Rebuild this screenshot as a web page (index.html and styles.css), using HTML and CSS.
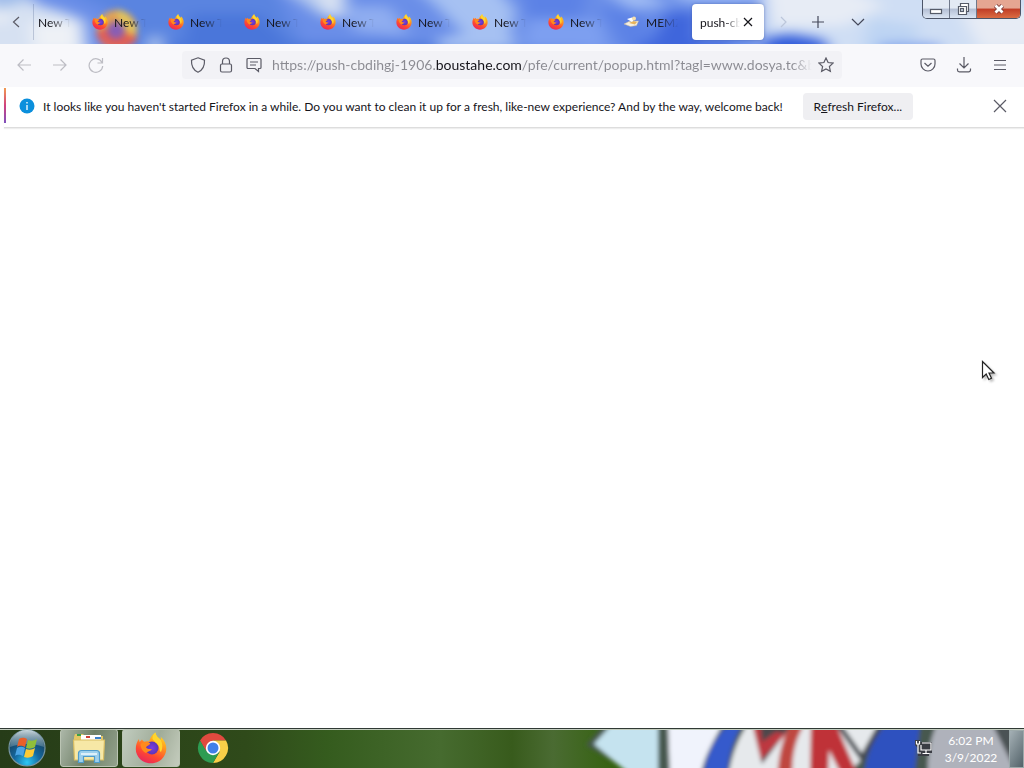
FILE: index.html
```html
<!DOCTYPE html>
<html lang="en">
<head>
  <meta charset="UTF-8" />
  <title>push-cbdihgj-1906.boustahe.com</title>
  <link rel="stylesheet" href="styles.css">
</head>
<body>
  <!-- Shared icons -->
  <svg class="defs" aria-hidden="true">
    <defs>
      <linearGradient id="flame" x1="0.8" y1="0" x2="0.3" y2="1">
        <stop offset="0" stop-color="#ffe226" />
        <stop offset="0.35" stop-color="#ff9a1f" />
        <stop offset="0.7" stop-color="#ff4a30" />
        <stop offset="1" stop-color="#e8265e" />
      </linearGradient>
      <radialGradient id="globe">
        <stop offset="0" stop-color="#7a3fe0" />
        <stop offset="1" stop-color="#5b35b8" />
      </radialGradient>
      <symbol id="firefox" viewBox="0 0 32 32">
        <path fill="url(#flame)" d="M4 7c0 1 .2 2 .6 3L7 7.500c.4 1 1.200 1.800 2.200 2.300 1.600-.6 3.200-.7 5-.3C15 6 17 2.500 20.500.500c.3 3.500 3 5 5.200 7.500.4-1.200.3-2.300 0-3.300C29.500 8 31.500 12.500 31.300 17 31 25 24.500 31.300 16 31.300S.8 25 .8 17c0-4 1.200-7.400 3.200-10z" />
        <circle cx="17" cy="16" r="6.500" fill="url(#globe)" />
        <path fill="#ff8a1c" d="M5.500 12c2.500-2.600 7-2.600 9.800-.5-1 2-3.300 2.300-4.300 3.700 1.500 2.400 4 1.200 6 2.300-1.500 2-4.500 1.600-6 3.500-3-1-5.500-5-5.500-9z" />
        <path fill="#ffd52e" d="M20.500.500c.3 3.500 3 5 5.200 7.500 2 3.500 2.300 8 .3 12-1-.5-1.500-1.500-1.500-3C24 11 18 9.500 17.500 6.500c0-2.500 1-4.500 3-6z" />
      </symbol>
    </defs>
  </svg>

  <!-- Tab strip -->
  <header class="titlebar">
    <svg class="sky" viewBox="0 0 1024 44" preserveAspectRatio="none" aria-hidden="true">
      <defs>
        <filter id="soft" filterUnits="userSpaceOnUse" x="-40" y="-40" width="1104" height="130" color-interpolation-filters="sRGB"><feGaussianBlur stdDeviation="8 6" /></filter>
        <filter id="glass" x="-20%" y="-20%" width="140%" height="140%" color-interpolation-filters="sRGB"><feGaussianBlur stdDeviation="3" /></filter>
      </defs>
      <rect width="1024" height="44" fill="#6a8ee8" />
      <g filter="url(#soft)">
        <path fill="#6a8ee8" d="M-40-40h1104v130H-40z" />
        <path fill="#5a84e0" d="M40-20h230l40 80H130l-20-50z" />
        <path fill="#4a76da" d="M190 14h70l50 50H180zM140 44h440v20H140z" />
        <path fill="#d6e1f2" d="M-30-20h50l16 24 28 8 20 8 6 50H-30z" />
        <path fill="#9ebbea" d="M-30-20h60l-4 22-30 6z" />
        <path fill="#eef1f6" d="M30 22h48v30H34zM-10 14h18v8H-10z" />
        <path fill="#b4c9ee" d="M148 38l12-4 6 30h-18zM268-20h78l2 38-26-2z" />
        <path fill="#d9e2f2" d="M306-20h36v38l-14-2z" />
        <path fill="#8fadf0" d="M340 6h50l20 30-54-4zM400-20h30l70 50-20 6z" />
        <path fill="#a6c1f2" d="M420-10l70-10 26 30-6 26-40 4zM438 38l70-12 10 24h-80z" />
        <path fill="#5c82e6" d="M520-20h70l-10 40-50 10zM600 8h30l60 50h-60z" />
        <path fill="#7d9ff0" d="M530 18l70 2 10 30h-90z" />
        <path fill="#9ebaf3" d="M590-20l30-4 50 30-40 4zM654-20h100v22h-70z" />
        <path fill="#3f66dc" d="M666 12h30v50h-50zM640 42h90v20h-90z" />
        <path fill="#cfdef4" d="M760-40h310v120H800l-40-30z" />
        <path fill="#e7ecf5" d="M764-24h60l60 30-40 20h-70zM960 10h90v40h-70z" />
        <path fill="#bdd4f3" d="M870 18l50 8-10 30h-50zM900-20h40v20z" />
        <path fill="#2f5ada" d="M764 38l26-4 34 6 10 24h-70z" />
        <path fill="#7fa0ea" d="M880 44h60v20h-60z" />
      </g>
      <g filter="url(#glass)" opacity=".9">
        <circle cx="117" cy="30" r="20" fill="#f4a63e" />
        <path fill="#ee5a46" d="M96 32c4 22 34 20 42 6l-12-4-20-6z" />
        <circle cx="116" cy="30" r="9" fill="#8d5ab0" />
        <path fill="#f4cf4a" d="M118 9l10 6 10 16-8 2-12-14z" />
      </g>
    </svg>
    <nav class="tabs" aria-label="Tabs">
      <button class="scroll-left" aria-label="Scroll tabs left"><svg width="16" height="16"><path d="M10 3L4.500 8 10 13" /></svg></button>
      <a href="#" class="tab first"><span>New Tab</span></a>
      <a href="#" class="tab"><svg class="fav"><use href="#firefox" /></svg><span>New Tab</span></a>
      <a href="#" class="tab"><svg class="fav"><use href="#firefox" /></svg><span>New Tab</span></a>
      <a href="#" class="tab"><svg class="fav"><use href="#firefox" /></svg><span>New Tab</span></a>
      <a href="#" class="tab"><svg class="fav"><use href="#firefox" /></svg><span>New Tab</span></a>
      <a href="#" class="tab"><svg class="fav"><use href="#firefox" /></svg><span>New Tab</span></a>
      <a href="#" class="tab"><svg class="fav"><use href="#firefox" /></svg><span>New Tab</span></a>
      <a href="#" class="tab"><svg class="fav"><use href="#firefox" /></svg><span>New Tab</span></a>
      <a href="#" class="tab">
        <svg class="fav" viewBox="0 0 16 16"><path fill="#f6efe2" stroke="#c9b695" stroke-width=".5" d="M0 10l5-2.500 9.500-.5-2 4.500-6 1z" /><path fill="#e8b45c" d="M5 9l4-2 4 1-2 2.500z" /><path fill="#fff" d="M3 5l5-1.500 2 2L8 8z" /><circle cx="10" cy="4.500" r="2" fill="#f4dfae" /></svg>
        <span>MEMZ</span>
      </a>
      <div class="tab active">
        <span>push-cbd</span>
        <button aria-label="Close tab"><svg width="16" height="16"><path d="M4 4l8 8M12 4l-8 8" /></svg></button>
      </div>
      <button class="tool faint" aria-label="Scroll tabs right"><svg width="16" height="16"><path d="M6 3l5 5-5 5" /></svg></button>
      <button class="tool" aria-label="New tab"><svg width="16" height="16"><path d="M8 2v12M2 8h12" /></svg></button>
      <button class="tool" aria-label="List all tabs"><svg width="16" height="16"><path d="M2 5l6 6 6-6" /></svg></button>
    </nav>
    <div class="window-buttons">
      <button aria-label="Minimize"><svg width="16" height="14"><rect x="2.500" y="7.500" width="11" height="4" fill="#fff" stroke="#555b68" /></svg></button>
      <button aria-label="Restore"><svg width="16" height="14"><path fill="#fff" stroke="#555b68" d="M5.500 1.500h8v8h-2v3h-8v-8h2z" /><rect x="5.500" y="6.500" width="3" height="3" fill="#ccd5e5" stroke="#555b68" /><path fill="none" stroke="#555b68" d="M5.500 4.500h6v5" /></svg></button>
      <button class="close" aria-label="Close"><svg width="16" height="14"><path d="M4.500 3.500l7 7M11.500 3.500l-7 7" stroke="#7a3a38" stroke-width="4.500" /><path d="M4.500 3.500l7 7M11.500 3.500l-7 7" stroke="#fff" stroke-width="2.800" /></svg></button>
    </div>
  </header>

  <!-- Navigation toolbar -->
  <div class="toolbar">
    <div class="nav-buttons">
      <button aria-label="Back"><svg width="16" height="16"><path d="M15 8H2M7.500 2.500L2 8l5.500 5.500" /></svg></button>
      <button aria-label="Forward"><svg width="16" height="16"><path d="M1 8h13M8.500 2.500L14 8l-5.500 5.500" /></svg></button>
      <button aria-label="Reload"><svg width="16" height="16"><path d="M14 5.500A6.800 6.800 0 1 0 14.700 9M14.500 1v5h-5" /></svg></button>
    </div>
    <form class="urlbar">
      <button type="button" aria-label="Tracking protection"><svg width="16" height="16"><path d="M8 .8l6.500 2.400c.3 5.500-1.500 9.700-6.500 12C3 12.900 1.200 8.700 1.500 3.200z" /></svg></button>
      <button type="button" aria-label="Site information"><svg width="16" height="16"><rect x="2.500" y="7" width="11" height="8" rx="1.500" /><path d="M4.500 7V4.500a3.500 3.500 0 0 1 7 0V7" /></svg></button>
      <button type="button" aria-label="Permissions"><svg width="16" height="16"><path d="M2 1.500h12a1 1 0 0 1 1 1v8a1 1 0 0 1-1 1h-1.500v3l-3.500-3H2a1 1 0 0 1-1-1v-8a1 1 0 0 1 1-1zM4 5h8M4 8h6" /></svg></button>
      <input type="text" aria-label="Address" value="https://push-cbdihgj-1906.boustahe.com/pfe/current/popup.html?tagl=www.dosya.tc&amp;b">
      <button type="button" aria-label="Bookmark this page"><svg width="16" height="16"><path d="M8 1l2.100 4.500 5 .6-3.700 3.400 1 4.900L8 12l-4.400 2.400 1-4.900L.9 6.100l5-.6z" /></svg></button>
    </form>
    <div class="actions">
      <button aria-label="Save to Pocket"><svg width="16" height="16"><path d="M2.500 2h11A1.500 1.500 0 0 1 15 3.500V7A7 7 0 0 1 1 7V3.500A1.500 1.500 0 0 1 2.500 2zM4.500 6L8 9.300 11.500 6" /></svg></button>
      <button aria-label="Downloads"><svg width="16" height="16"><path d="M8 0v11M3.500 6.500L8 11l4.500-4.500M1.500 11.500V13A1.800 1.800 0 0 0 3.300 14.800h9.400A1.800 1.800 0 0 0 14.500 13v-1.500" /></svg></button>
      <button aria-label="Menu"><svg width="16" height="16"><path d="M2 3.500h12M2 8h12M2 12.500h12" /></svg></button>
    </div>
  </div>

  <!-- Notification -->
  <section class="notice">
    <svg class="info" width="16" height="16"><circle cx="8" cy="8" r="7.500" fill="#0b8fdc" /><path d="M8 7v5M8 4v1.500" stroke="#fff" stroke-width="1.300" /></svg>
    <p>It looks like you haven't started Firefox in a while. Do you want to clean it up for a fresh, like-new experience? And by the way, welcome back!</p>
    <button class="refresh">R<u>e</u>fresh Firefox...</button>
    <button class="dismiss" aria-label="Close notification"><svg width="16" height="16"><path d="M2 2l12 12M14 2L2 14" /></svg></button>
  </section>

  <main></main>

  <!-- Taskbar -->
  <footer class="taskbar">
    <svg class="wallpaper" viewBox="0 0 1024 40" preserveAspectRatio="none" aria-hidden="true">
      <defs>
        <linearGradient id="grass">
          <stop offset="0" stop-color="#263c18" />
          <stop offset="0.24" stop-color="#2f4a1a" />
          <stop offset="0.32" stop-color="#355c1e" />
          <stop offset="0.43" stop-color="#466b2f" />
          <stop offset="0.5" stop-color="#385b1c" />
          <stop offset="0.54" stop-color="#4a6b32" />
          <stop offset="0.6" stop-color="#35620f" />
        </linearGradient>
        <filter id="smear" x="-5%" y="-20%" width="110%" height="140%"><feGaussianBlur stdDeviation="2" /></filter>
      </defs>
      <rect width="1024" height="40" fill="url(#grass)" />
      <g filter="url(#smear)">
        <path fill="#46584f" d="M606-6h440v56H640L586 17z" />
        <path fill="#c5e3ef" d="M614-6h44v56h-24L594 16z" />
        <path fill="#f0f3fc" d="M668-6h56c-10 18-20 34-24 56h-30z" />
        <path fill="#345acc" d="M728-4h14c-10 20-14 34-15 54h-24c2-20 10-38 25-54z" />
        <path fill="#e6e9ec" d="M749-6h136l-24 38-18 18H728c4-24 9-38 21-56z" />
        <path fill="#4d464c" d="M752-6h42l-32 42z" />
        <path fill="#bd3940" d="M752-6h8l2 20 14-10 10 2-25 26z" />
        <path fill="#bf4641" d="M792-6h14c-12 18-14 36-14 56h-15c2-22 4-38 15-56z" />
        <path fill="#bf3338" d="M811-6h24l24 56h-16l-14-28-1 28h-18z" />
        <path stroke="#454a50" stroke-width="5" fill="none" d="M838-4l24 34 20-36" />
        <path fill="#2e51bf" d="M886-4h34l-6 54h-50c1-20 8-38 22-54z" />
        <path fill="#afb2bb" d="M938-6h58l30 56h-98c-1-22 2-40 10-56z" />
        <path fill="#4b5354" d="M991-6h35v56l-14-14z" />
      </g>
      <rect width="1024" height="1" fill="#303a35" />
      <rect y="1" width="1024" height="1" fill="#c3cdbf" />
    </svg>
    <button class="start" aria-label="Start">
      <svg width="40" height="40" viewBox="0 0 40 40">
        <defs>
          <radialGradient id="orb" cx=".5" cy=".9" r=".8"><stop offset="0" stop-color="#2cc8f5" /><stop offset=".45" stop-color="#14689f" /><stop offset="1" stop-color="#183951" /></radialGradient>
          <linearGradient id="shine" x2="0" y2="1"><stop offset="0" stop-color="#dce8ec" stop-opacity=".9" /><stop offset="1" stop-color="#84a8b7" stop-opacity=".4" /></linearGradient>
        </defs>
        <circle cx="20" cy="20" r="18" fill="url(#orb)" stroke="#7795a1" />
        <path fill="url(#shine)" d="M3 19a17 17 0 0 1 34 0c-10-4-24-4-34 0z" />
        <path fill="#e9602a" d="M12 11c3-2 6-1 8 0l-2 8c-3-1-5-2-8 0z" />
        <path fill="#8fbf3a" d="M21 12c3 1 6 1 9-1l-2 8c-3 2-6 2-9 1z" />
        <path fill="#4ba4e4" d="M10 20c3-2 6-1 8 0l-2 8c-3-1-5-2-8 0z" />
        <path fill="#fccb35" d="M19 21c3 1 6 1 9-1l-2 8c-3 2-6 2-9 1z" />
      </svg>
    </button>
    <button class="task" aria-label="Explorer">
      <svg width="34" height="32" viewBox="0 0 34 32">
        <path fill="#e3c765" d="M2 5l1-3h8l2 2h18v22H2z" />
        <path fill="#fff" d="M9 3h20v5H9z" />
        <path fill="#3b9f4a" d="M5 2h4v2H5z" /><path fill="#cf4038" d="M14 4h4v2h-4z" /><path fill="#3980cb" d="M23 5h6v2h-6z" />
        <path fill="#f7e8a6" stroke="#d9bd62" d="M1.500 8h31l-1 20h-29z" />
        <path fill="#9dd0ec" stroke="#4f9ccc" d="M6.500 30.500v-9q0-3 3-3h15q3 0 3 3v9h-5v-6h-11v6z" />
        <path fill="#dcf0fa" d="M9 21h16v2H9z" />
      </svg>
    </button>
    <button class="task current" aria-label="Firefox"><svg width="32" height="32"><use href="#firefox" /></svg></button>
    <button class="task plain" aria-label="Chrome">
      <svg width="32" height="32" viewBox="0 0 32 32">
        <path fill="#e04a3f" d="M3 8.500A15 15 0 0 1 29 8.500H16l-7 11z" />
        <path fill="#f8cf48" d="M29 8.500A15 15 0 0 1 16 31l6.500-11L16 8.500z" />
        <path fill="#2d9c52" d="M3 8.500A15 15 0 0 0 16 31l6.500-11.500h-13z" />
        <circle cx="16" cy="16" r="7.200" fill="#fff" /><circle cx="16" cy="16" r="5.500" fill="#4180e8" />
      </svg>
    </button>
    <div class="tray">
      <svg width="18" height="18"><path fill="#3a3d44" d="M0 1h5v2h12v11h-3v3H3V9L0 6z" /><path fill="none" stroke="#fff" stroke-width="1.200" d="M1.500 2v3h3V2M3 5v9h3M7 4h9v7H6V6M11 11v3M7.500 14.500h7" /></svg>
      <time datetime="2022-03-09T18:02">6:02 PM<br>3/9/2022</time>
      <button class="show-desktop" aria-label="Show desktop"></button>
    </div>
  </footer>

  <svg class="cursor" width="16" height="22" aria-hidden="true"><path fill="#fff" stroke="#222" stroke-width="1.200" d="M1.500 1.500v16l3.700-3.500 2.600 5.500 2.700-1.200L8 13h5z" /></svg>
</body>
</html>
```
FILE: styles.css
```css
* { box-sizing: border-box; }
body {
  font-family: Lato, "Open Sans", sans-serif;
  font-size: 12px;
  margin: 0;
  min-height: 100vh;
  display: flex;
  flex-direction: column;
  background: #fff;
  color: #15141a;
  overflow-x: hidden;
}
button {
  font: inherit;
  color: inherit;
  padding: 0;
  border: none;
  background: none;
  display: flex;
  align-items: center;
  justify-content: center;
  flex: none;
}
svg {
  display: block;
  flex: none;
}
button svg {
  fill: none;
  stroke: #5b5b66;
  stroke-width: 1.2;
}
.defs {
  position: absolute;
  width: 0;
  height: 0;
}

/* Tab strip */
.titlebar {
  position: relative;
  display: flex;
  height: 44px;
  overflow: hidden;
}
.sky, .wallpaper {
  position: absolute;
  inset: 0;
  width: 100%;
  height: 100%;
}
.tabs {
  position: relative;
  display: flex;
  align-items: center;
  flex: 1;
}
.scroll-left {
  width: 34px;
  height: 36px;
  border-right: 1px solid rgba(90, 110, 150, 0.3);
}
.tab {
  display: flex;
  align-items: center;
  gap: 6px;
  width: 76px;
  height: 36px;
  padding: 0 8px;
  flex: none;
  color: #15141a;
  text-decoration: none;
}
.tab.first {
  width: 50px;
  padding-left: 4px;
}
.tab span {
  flex: 1;
  overflow: hidden;
  line-height: 21px;
  white-space: nowrap;
  -webkit-mask-image: linear-gradient(to left, transparent 6px, #000 26px);
  mask-image: linear-gradient(to left, transparent 6px, #000 26px);
}
.tab.active {
  width: 72px;
  margin-right: 4px;
  gap: 0;
  background: #fff;
  border-radius: 4px;
  box-shadow: 0 0 3px rgba(40, 60, 120, 0.4);
}
.tab.active span {
  -webkit-mask-image: linear-gradient(to left, transparent, #000 16px);
  mask-image: linear-gradient(to left, transparent, #000 16px);
}
.tab.active svg {
  stroke: #15141a;
}
.fav {
  width: 16px;
  height: 16px;
}
.tool {
  width: 40px;
  height: 36px;
}
.tool svg {
  stroke: #44485a;
}
.tool.faint {
  width: 30px;
}
.tool.faint svg {
  stroke: #bcc6da;
}
.window-buttons {
  position: relative;
  display: flex;
  width: 99px;
  height: 19px;
  margin-right: 3px;
  border: 1px solid #4c5568;
  border-top: none;
  border-radius: 0 0 5px 5px;
  overflow: hidden;
}
.window-buttons button {
  width: 27px;
  background: linear-gradient(#e2e9f3 45%, #b4bfd4 50%, #dbe5f3);
  border-right: 1px solid #6f788a;
}
.window-buttons .close {
  flex: 1;
  border: none;
  background: linear-gradient(#e5a692 45%, #c03d26 50%, #db6c43);
}

/* Navigation toolbar */
.toolbar {
  display: flex;
  align-items: center;
  justify-content: space-between;
  height: 43px;
  padding: 0 6px 2px;
  background: #f8f8fb;
}
.toolbar button {
  width: 36px;
  height: 32px;
}
.nav-buttons, .actions {
  display: flex;
}
.nav-buttons svg {
  stroke: #bdbdc4;
}
.urlbar {
  display: flex;
  align-items: center;
  flex: 1;
  max-width: 660px;
  height: 28px;
  margin: 0 68px;
  padding: 0 2px;
  background: #f2f2f6;
  border-radius: 4px;
}
.toolbar .urlbar button {
  width: 28px;
}
.urlbar input {
  flex: 1;
  min-width: 0;
  height: 28px;
  margin-left: 4px;
  padding: 0;
  border: none;
  outline: none;
  font: 14px Lato, "Open Sans", sans-serif;
  color: transparent;
  /* the host name is darker than the rest of the address */
  background: linear-gradient(90deg, #8a8a91 164px, #15141a 164px 250px, #8a8a91 250px calc(100% - 20px), transparent);
  -webkit-background-clip: text;
  background-clip: text;
}

/* Notification */
.notice {
  display: flex;
  align-items: center;
  height: 41px;
  padding: 0 8px 2px 15px;
  margin: 0 0 0 4px;
  border-bottom: 1px solid #ddd;
  box-shadow: 0 1px 1px #eee;
  background: linear-gradient(#f29a50, #d0407e, #7e50bd) 0 1px / 2px 35px no-repeat, #fff;
}
.notice p {
  margin: 0 20px 0 8px;
  line-height: 21px;
  white-space: nowrap;
}
.refresh {
  width: 110px;
  height: 27px;
  background: #efeff2;
  border-radius: 4px;
}
.dismiss {
  width: 32px;
  height: 32px;
  margin-left: auto;
}

main { flex: 1; }

/* Taskbar */
.taskbar {
  position: relative;
  display: flex;
  height: 40px;
  padding-left: 6px;
}
.taskbar button, .tray { position: relative; }
.taskbar button svg { stroke: none; }
.start {
  width: 42px;
  height: 40px;
}
.task {
  width: 58px;
  height: 38px;
  margin: 1px 0 0 4px;
  border: 1px solid #bac4b3;
  border-radius: 3px;
  background: linear-gradient(110deg, #acb7a8, #6f8067 50%, #94a28d);
}
.start + .task { margin-left: 12px; }
.task.current { background: linear-gradient(110deg, #c1ccbf, #a0ac99 55%, #c4ccbd); }
.task.plain {
  border-color: transparent;
  background: none;
}
.tray {
  display: flex;
  align-items: center;
  gap: 6px;
  margin-left: auto;
  color: #fff;
}
.tray time {
  width: 64px;
  padding-top: 2px;
  line-height: 17px;
  text-align: center;
}
.show-desktop {
  width: 15px;
  height: 38px;
  margin-top: 2px;
  border: 1px solid #9ca9aa;
  background: linear-gradient(120deg, #a4b0b5, #536269);
}

.cursor {
  position: absolute;
  left: calc(100% - 43px);
  top: 360px;
  filter: drop-shadow(2px 2px 1px rgba(0, 0, 0, 0.25));
}
```
